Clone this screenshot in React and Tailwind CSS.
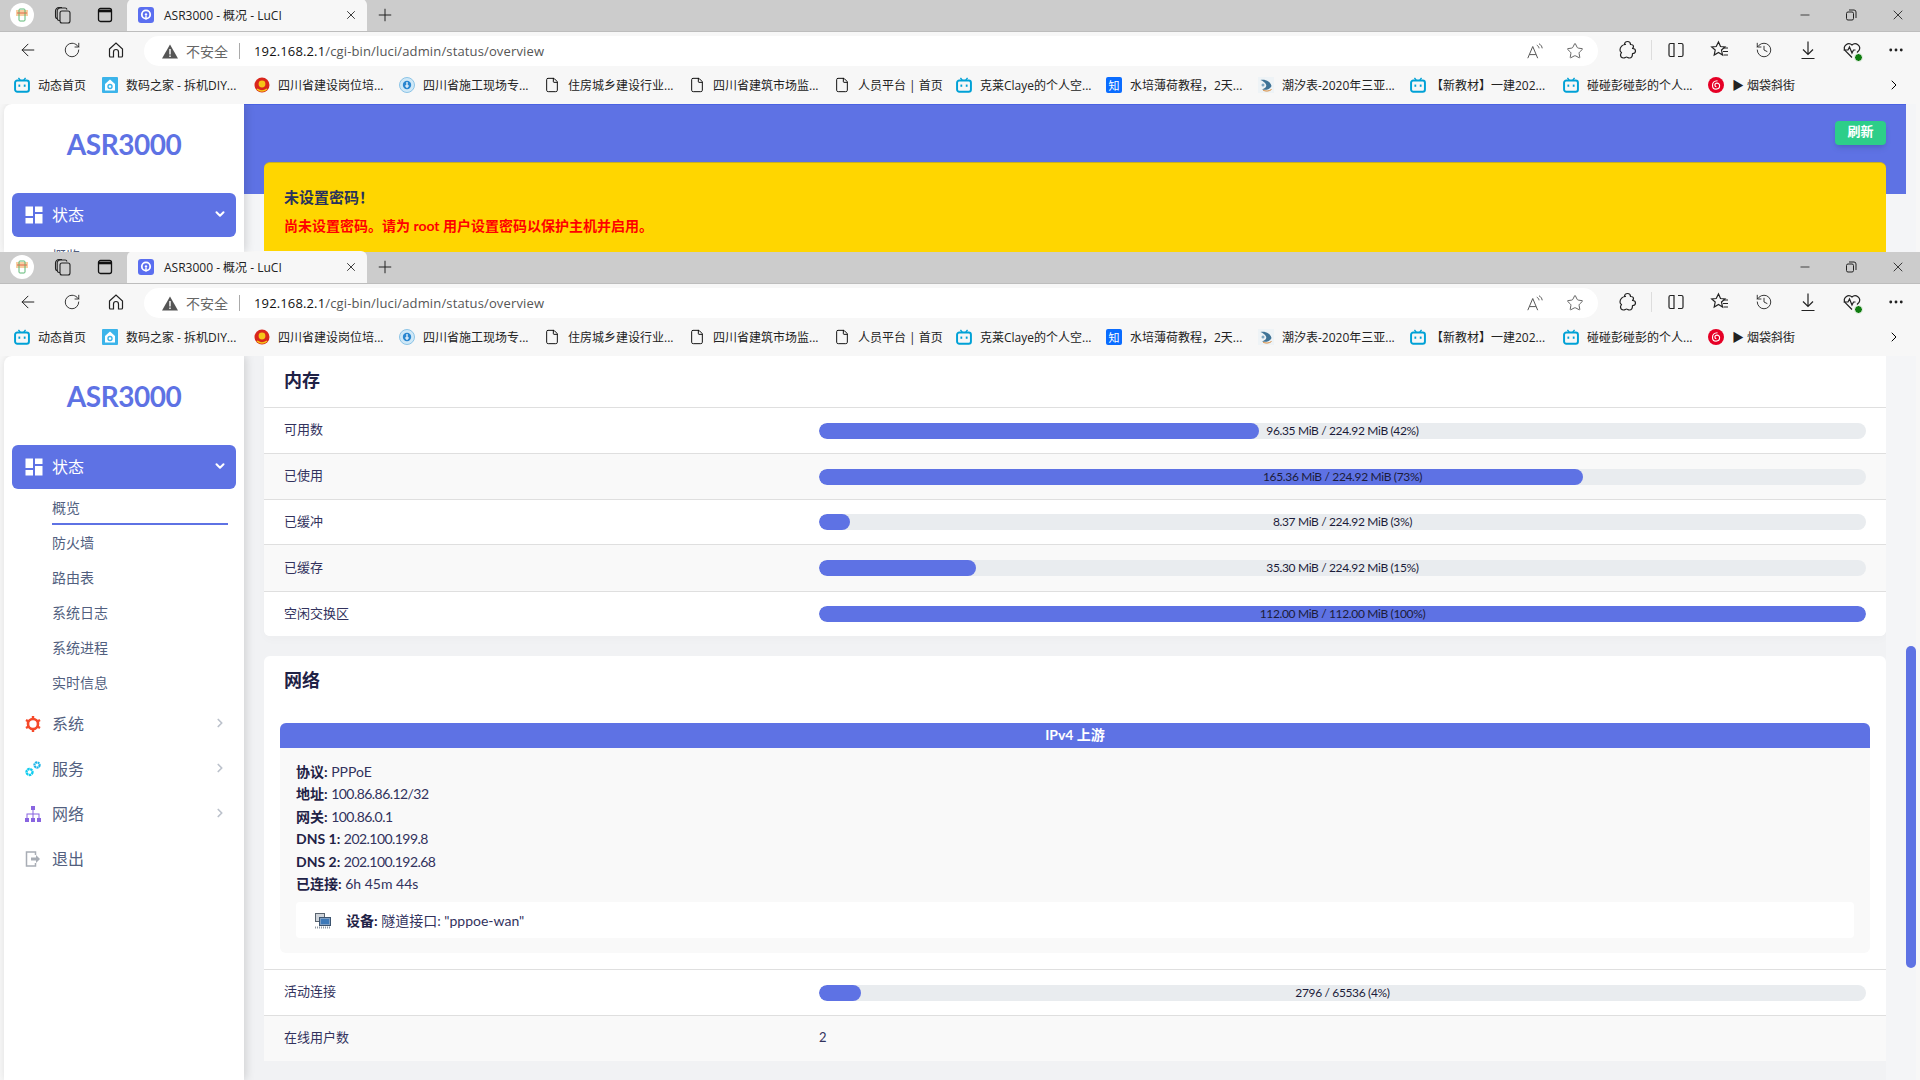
import React from "react";
import { ArrowLeft, RotateCw, Star, History, MoreHorizontal, X, Plus, Minus, File, ChevronRight, ChevronDown } from "lucide-react";

const SANS = "font-['Lato','Noto_Sans_CJK_SC',sans-serif]";

function Bili({ className = "" }) {
  return (
    <svg viewBox="0 0 18 18" className={"w-4 h-4 " + className} fill="none">
      <path d="M5 1l2 2.5M13 1l-2 2.5" stroke="#00a1d6" strokeWidth="1.6" />
      <rect x="1.2" y="4" width="15.6" height="12.6" rx="2.5" stroke="#00a1d6" strokeWidth="2.2" />
      <rect x="5" y="8.5" width="2" height="2.5" fill="#00a1d6" />
      <rect x="11" y="8.5" width="2" height="2.5" fill="#00a1d6" />
    </svg>
  );
}
function Doc() {
  return <File className="w-4 h-4 text-black" strokeWidth={1.4} />;
}
function ItHome() {
  return (
    <svg viewBox="0 0 16 16" className="w-4 h-4">
      <rect width="16" height="16" rx="1" fill="#3cb4ea" />
      <path d="M8 2.5L13 7v6.5H3V7z" fill="#fff" />
      <circle cx="8" cy="9.5" r="2" fill="none" stroke="#3cb4ea" strokeWidth="1.4" />
    </svg>
  );
}
function Emblem() {
  return (
    <svg viewBox="0 0 16 16" className="w-4 h-4">
      <circle cx="8" cy="8" r="7.5" fill="#d9261c" />
      <circle cx="8" cy="7" r="3.4" fill="#f5c518" />
      <path d="M3 12c3 2.4 7 2.4 10 0" stroke="#f5c518" strokeWidth="1.6" fill="none" />
    </svg>
  );
}
function Gov() {
  return (
    <svg viewBox="0 0 16 16" className="w-4 h-4">
      <circle cx="8" cy="8" r="7.5" fill="#cfe8f7" stroke="#8cc4e6" />
      <circle cx="8" cy="8" r="4.2" fill="#2a86cf" />
      <path d="M8 5v6M6 9h4" stroke="#fff" strokeWidth="1.2" />
    </svg>
  );
}
function Zhihu() {
  return (
    <div className="w-4 h-4 rounded-[2px] bg-[#0a6cff] text-white text-[11px] leading-4 text-center font-['Noto_Sans_CJK_SC',sans-serif]">知</div>
  );
}
function Tide() {
  return (
    <svg viewBox="0 0 16 16" className="w-4 h-4">
      <rect width="16" height="16" fill="#eef3f6" />
      <path d="M2.500 3c5-1 10 1.500 11 6-1.500 3.500-6 4.500-9.500 3.500 3-1 5-3 4-5-1-2-3-3.500-5.500-4.500z" fill="#3f7396" />
      <circle cx="5" cy="8" r="1.500" fill="#7fa6c0" />
      <path d="M5 13c2 1.500 6 1.500 8.500-.5" stroke="#d8893a" strokeWidth="1" fill="none" />
    </svg>
  );
}
function Netease() {
  return (
    <svg viewBox="0 0 16 16" className="w-4 h-4">
      <circle cx="8" cy="8" r="8" fill="#e60026" />
      <path d="M9.5 3.8C6.5 3.9 4.5 5.8 4.5 8.4c0 2.2 1.6 3.7 3.6 3.7s3.5-1.5 3.5-3.3c0-1.6-1.1-2.7-2.5-2.7-1.3 0-2.2.9-2.2 2 0 1 .7 1.7 1.5 1.7" stroke="#fff" strokeWidth="1.1" fill="none" />
    </svg>
  );
}

const BOOKMARKS = [
  { w: "w-[88px]", icon: <Bili />, label: "动态首页" },
  { w: "w-[152px]", icon: <ItHome />, label: "数码之家 - 拆机DIY..." },
  { w: "w-[145px]", icon: <Emblem />, label: "四川省建设岗位培..." },
  { w: "w-[145px]", icon: <Gov />, label: "四川省施工现场专..." },
  { w: "w-[145px]", icon: <Doc />, label: "住房城乡建设行业..." },
  { w: "w-[145px]", icon: <Doc />, label: "四川省建筑市场监..." },
  { w: "w-[122px]", icon: <Doc />, label: "人员平台 | 首页" },
  { w: "w-[150px]", icon: <Bili />, label: "克莱Claye的个人空..." },
  { w: "w-[152px]", icon: <Zhihu />, label: "水培薄荷教程，2天..." },
  { w: "w-[152px]", icon: <Tide />, label: "潮汐表-2020年三亚..." },
  { w: "w-[153px]", icon: <Bili />, label: "【新教材】一建202...", gap: "ml-[-3px]" },
  { w: "w-[145px]", icon: <Bili />, label: "碰碰彭碰彭的个人..." },
  { w: "w-[120px]", icon: <Netease />, label: "▶ 烟袋斜街" },
];

function Collections() {
  return (
    <svg viewBox="0 0 18 18" className="w-[18px] h-[18px]" fill="none" stroke="#222" strokeWidth="1.1">
      <rect x="6" y="5" width="10" height="12" rx="2" />
      <path d="M6 14.5H5a2 2 0 0 1-1.800-2V5a3 3 0 0 1 3-3h5a2 2 0 0 1 1.800 1.500" />
      <path d="M3.500 12.500A2 2 0 0 1 1.500 10.500V5A3.500 3.500 0 0 1 5 1.500h3" />
    </svg>
  );
}
function VerticalTabs() {
  return (
    <svg viewBox="0 0 16 16" className="w-4 h-4" fill="none" stroke="#111" strokeWidth="1.3">
      <rect x="1.500" y="1.500" width="13" height="13" rx="2" />
      <path d="M1.500 4h13" strokeWidth="2.600" />
    </svg>
  );
}
function Profile() {
  return (
    <div className="w-6 h-6 rounded-full bg-white flex items-center justify-center">
      <svg viewBox="0 0 16 16" className="w-4 h-4" fill="none">
        <rect x="2" y="3" width="12" height="6" fill="#f6c28a" opacity=".8" />
        <rect x="5" y="2" width="6" height="12" rx="1" stroke="#5cb874" strokeWidth="1" />
        <path d="M3 6h10" stroke="#e06a4a" strokeWidth="1" />
      </svg>
    </div>
  );
}
function Favicon() {
  return (
    <svg viewBox="0 0 16 16" className="w-4 h-4">
      <rect width="16" height="16" rx="3" fill="#5b6ff0" />
      <circle cx="8" cy="7.500" r="4.200" fill="none" stroke="#fff" strokeWidth="1.800" />
      <circle cx="8" cy="7.500" r="1.200" fill="#fff" />
      <path d="M8 9v3.500" stroke="#fff" strokeWidth="1.400" />
    </svg>
  );
}
function HomeIcon() {
  return (
    <svg viewBox="0 0 18 18" className="w-[18px] h-[18px]" fill="none" stroke="#222" strokeWidth="1.200">
      <path d="M2.500 8L9 2l6.500 6v7a1 1 0 0 1-1 1h-3v-5a2.500 2.500 0 0 0-5 0v5h-3a1 1 0 0 1-1-1z" />
    </svg>
  );
}
function ReadAloud() {
  return (
    <svg viewBox="0 0 20 20" className="w-[18px] h-[18px]" fill="none" stroke="#555" strokeWidth="1.100">
      <path d="M2 18L7.500 5 13 18M4 14h7" />
      <path d="M12 3.500c1.500.8 2.300 2 2.500 3.500M14.500 2c2 1 3.200 2.800 3.500 5" />
    </svg>
  );
}
function PuzzleIcon() {
  return (
    <svg viewBox="0 0 20 20" className="w-5 h-5" fill="none" stroke="#222" strokeWidth="1.200" strokeLinejoin="round">
      <path d="M7.500 4.500C7.500 2.500 9 1.500 10.500 1.500S13.500 2.500 13.500 4.500c1.500 0 3 .5 3 2 0 1-.5 1.500-1 2 1.500 0 3 1 3 2.500s-1.500 2.500-3 2.500c0 2-.5 4.500-3 4.500-1.500 0-2-1-3-1s-1.500 1-3 1c-2 0-3-1.500-3-3 0-1 .5-1.500 1-2.500-1-.5-1.500-1.500-1.500-2.500 0-3 2.500-5.500 5.500-5.500z" />
    </svg>
  );
}
function SplitIcon() {
  return (
    <svg viewBox="0 0 20 20" className="w-5 h-5" fill="none" stroke="#222" strokeWidth="1.200">
      <path d="M8 3.500H4.500A1.500 1.500 0 0 0 3 5v10a1.500 1.500 0 0 0 1.500 1.500H8z" />
      <path d="M12 3.500h3.500A1.500 1.500 0 0 1 17 5v10a1.500 1.500 0 0 1-1.500 1.500H12" />
      <path d="M10 1.500v17" strokeOpacity="0" />
    </svg>
  );
}
function FavList() {
  return (
    <svg viewBox="0 0 20 20" className="w-5 h-5" fill="none" stroke="#222" strokeWidth="1.200">
      <path d="M8.500 2l2 4.500 4.500.5-3.500 3 1 5L8.500 12.500 4.200 15l1-5-3.500-3 4.500-.5z" />
      <path d="M13.500 8H18M13 11.500h5M13.500 15H18" />
    </svg>
  );
}
function DownloadIcon() {
  return (
    <svg viewBox="0 0 20 20" className="w-5 h-5" fill="none" stroke="#222" strokeWidth="1.200">
      <path d="M10 1.500v13M5 9.500l5 5 5-5M3.500 18.500h13" />
    </svg>
  );
}
function HealthHeart() {
  return (
    <div className="relative w-5 h-5">
      <svg viewBox="0 0 20 20" className="w-5 h-5" fill="none" stroke="#222" strokeWidth="1.200">
        <path d="M10 17.500L3 10.500a4.500 4.500 0 0 1 7-5.500 4.500 4.500 0 0 1 7 5.500l-2 2" />
        <path d="M1.500 10H6l1.500-3 2.500 6 1.500-3h2" />
      </svg>
      <div className="absolute right-[-1px] bottom-[-2px] w-[9px] h-[9px] rounded-full bg-[#107c10] border border-white" />
    </div>
  );
}
function ToolBtn({ children }) {
  return <div className="w-[44px] h-5 flex items-center justify-center shrink-0">{children}</div>;
}

function Chrome() {
  return (
    <div className="shrink-0 h-[104px] bg-[#f7f7f7] font-['Open_Sans','Noto_Sans_CJK_SC',sans-serif]">
      <div className="h-8 bg-[#cccccc] flex items-end border-b border-[#bdbdbd] relative">
        <div className="h-8 w-[127px] flex items-center pl-[10px] shrink-0">
          <Profile />
          <div className="ml-[20px]"><Collections /></div>
          <div className="ml-[25px]"><VerticalTabs /></div>
        </div>
        <div className="h-8 w-[240px] bg-[#f7f7f7] rounded-t-md flex items-center pl-[11px] pr-[9px] shrink-0">
          <Favicon />
          <span className="ml-[10px] pt-[2px] text-[12px] text-[#222] flex-1 whitespace-nowrap">ASR3000 - 概况 - LuCI</span>
          <X className="w-[14px] h-[14px] text-[#222]" strokeWidth={1.500} />
        </div>
        <div className="h-8 flex items-center ml-2">
          <Plus className="w-5 h-5 text-[#222]" strokeWidth={1.200} />
        </div>
        <div className="ml-auto h-8 flex items-center gap-[32px] pr-[14px]">
          <Minus className="w-[14px] h-[14px] text-[#222]" strokeWidth={1.400} />
          <svg viewBox="0 0 14 14" className="w-[14px] h-[14px]" fill="none" stroke="#222" strokeWidth="1">
            <rect x="2.500" y="4" width="7" height="8" rx="1.500" />
            <path d="M5 2h5a2 2 0 0 1 2 2v6" />
          </svg>
          <X className="w-4 h-4 text-[#222]" strokeWidth={1.300} />
        </div>
      </div>
      <div className="h-[34px] flex items-center text-[#222]">
        <div className="w-[144px] flex items-center shrink-0 pl-[18px] gap-[25px] pt-[2px]">
          <ArrowLeft className="w-5 h-5" strokeWidth={1.200} />
          <RotateCw className="w-[18px] h-[18px]" strokeWidth={1.200} />
          <div className="ml-px"><HomeIcon /></div>
        </div>
        <div className="w-[1454px] h-[30px] mt-[4px] bg-white rounded-full flex items-center pl-[18px] pr-[14px] shrink-0">
          <svg viewBox="0 0 16 15" className="w-4 h-[15px]"><path d="M8 0.500L16 14.500H0z" fill="#555" /><rect x="7.300" y="5" width="1.400" height="5.500" fill="#fff" /><rect x="7.300" y="11.500" width="1.400" height="1.500" fill="#fff" /></svg>
          <span className="ml-[8px] text-[14px] text-[#666]">不安全</span>
          <div className="ml-[11px] w-px h-4 bg-[#aaa]" />
          <span className="ml-[14px] pt-[1px] text-[13px] text-[#555] tracking-[0.14px]"><span className="text-[#111]">192.168.2.1</span>/cgi-bin/luci/admin/status/overview</span>
          <div className="ml-auto flex items-center gap-[22px]">
            <ReadAloud />
            <Star className="w-[18px] h-[18px] text-[#555]" strokeWidth={1.200} />
          </div>
        </div>
        <div className="flex-1 flex items-center pl-[7px] pt-[2px]">
          <ToolBtn><PuzzleIcon /></ToolBtn>
          <div className="mx-[2px] w-px h-5 bg-[#ddd] shrink-0" />
          <ToolBtn><SplitIcon /></ToolBtn>
          <ToolBtn><FavList /></ToolBtn>
          <ToolBtn><History className="w-[18px] h-[18px]" strokeWidth={1.200} /></ToolBtn>
          <ToolBtn><DownloadIcon /></ToolBtn>
          <ToolBtn><HealthHeart /></ToolBtn>
          <ToolBtn><MoreHorizontal className="w-[18px] h-[18px]" strokeWidth={1.800} /></ToolBtn>
        </div>
      </div>
      <div className="h-[38px] flex items-center pl-[14px] text-[12px] text-[#222] whitespace-nowrap relative">
        {BOOKMARKS.map((b) => (
          <div key={b.label} className={"flex items-center gap-[8px] shrink-0 overflow-hidden " + b.w}>
            {b.icon}
            <span className={"pt-[2px] " + (b.gap || "")}>{b.label}</span>
          </div>
        ))}
        <ChevronRight className="absolute right-[18px] top-[11px] w-4 h-4 text-black" strokeWidth={1.500} />
      </div>
    </div>
  );
}

function Gear() {
  return (
    <svg viewBox="0 0 16 16" className="w-4 h-4" fill="none">
      <circle cx="8" cy="8" r="5" stroke="#f5492a" strokeWidth="2.600" />
      <path d="M8 0v3M8 13v3M1 4l2.500 1.500M12.500 10.500L15 12M1 12l2.500-1.500M12.500 5.500L15 4" stroke="#f5492a" strokeWidth="2.400" />
    </svg>
  );
}
function Gears() {
  return (
    <svg viewBox="0 0 16 16" className="w-4 h-4" fill="none">
      <circle cx="4.500" cy="11" r="3" stroke="#11cdef" strokeWidth="2.400" strokeDasharray="2.400 .5" />
      <circle cx="12" cy="4" r="2.600" stroke="#1fb5e8" strokeWidth="2.200" strokeDasharray="2 .5" />
    </svg>
  );
}
function Tree() {
  return (
    <svg viewBox="0 0 16 16" className="w-4 h-4" fill="#8965e0">
      <rect x="6" y="0" width="4" height="4" />
      <rect x="0" y="12" width="4" height="4" />
      <rect x="6" y="12" width="4" height="4" />
      <rect x="12" y="12" width="4" height="4" />
      <path d="M7.500 4h1v3.500H14.500V12h-1V8.500H8.500V12h-1V8.500H2.500V12h-1V7.500h6z" />
    </svg>
  );
}
function Logout() {
  return (
    <svg viewBox="0 0 16 16" className="w-4 h-4" fill="none">
      <path d="M10.500 4V1H1.500v14h9v-3" stroke="#a8adb5" strokeWidth="1.500" />
      <path d="M6 6.500h5V4l4 4-4 4V9.500H6z" fill="#a8adb5" />
    </svg>
  );
}
function Dash() {
  return (
    <svg viewBox="0 0 18 18" className="w-[18px] h-[18px]" fill="#fff">
      <rect x="0.500" y="0.500" width="7.500" height="9.500" />
      <rect x="10" y="0.500" width="7.500" height="5.500" />
      <rect x="0.500" y="12" width="7.500" height="5.500" />
      <rect x="10" y="8" width="7.500" height="9.500" />
    </svg>
  );
}

function Sidebar({ showAll }) {
  const subs = ["防火墙", "路由表", "系统日志", "系统进程", "实时信息"];
  const tops = [
    { label: "系统", icon: <Gear /> },
    { label: "服务", icon: <Gears /> },
    { label: "网络", icon: <Tree /> },
    { label: "退出", icon: <Logout />, noArrow: true },
  ];
  return (
    <aside className="w-[240px] shrink-0 bg-white rounded-tl-lg shadow-[2px_0_10px_rgba(0,0,0,0.14)] relative z-10 flex flex-col">
      <div className="h-[89px] shrink-0 flex items-center justify-center pb-[9px] text-[28px] font-bold text-[#5e72e4] tracking-[-0.5px] font-['Lato',sans-serif]">ASR3000</div>
      <div className="mx-2 h-[44px] shrink-0 rounded-md bg-[#5e72e4] flex items-center pl-[13px] pr-[9px] text-white">
        <Dash />
        <span className="ml-[9px] text-[16px]">状态</span>
        <ChevronDown className="ml-auto mb-[2px] w-[14px] h-[14px]" strokeWidth={3.500} />
      </div>
      <div className="pl-[48px] pr-2 shrink-0 text-[14px] text-[#525f7f]">
        <div className="h-[36px] pt-[9px] w-[176px] border-b-[2px] border-[#5e72e4] leading-[20px]">概览</div>
        {showAll && subs.map((s) => (
          <div key={s} className="h-[35px] flex items-center">{s}</div>
        ))}
      </div>
      {showAll && (
        <div className="pl-[21px] pr-[17px] pt-[1px] text-[16px] text-[#525f7f]">
          {tops.map((t) => (
            <div key={t.label} className="h-[45px] flex items-center">
              {t.icon}
              <span className="ml-[11px]">{t.label}</span>
              {!t.noArrow && <ChevronRight className="ml-auto mb-[2px] w-[14px] h-[14px] text-[#bcc2cc]" strokeWidth={3} />}
            </div>
          ))}
        </div>
      )}
    </aside>
  );
}

function Bar({ pct, text }) {
  return (
    <div className="relative w-[1047px] h-4 rounded-lg bg-[#e9ecef] overflow-hidden">
      <div className={"h-full rounded-lg bg-[#5e72e4] " + pct} />
      <div className="absolute inset-0 flex items-center justify-center text-[12px] tracking-[-0.35px] text-[#1c1c3a] whitespace-nowrap">{text}</div>
    </div>
  );
}

function Row({ label, alt, h, children }) {
  return (
    <div className={"flex items-center pl-5 border-t border-[#dfdfdf] " + h + (alt ? " bg-[#f9f9f9]" : " bg-white")}>
      <div className="w-[535px] shrink-0 pb-[1px] text-[13px] text-[#32325d]">{label}</div>
      {children}
    </div>
  );
}

function InfoLine({ k, v, num }) {
  return (
    <div className="h-[22.400px] leading-[22.400px]">
      <b className="font-bold text-[#1f2246]">{k}:</b> <span className={num ? "tracking-[-0.55px]" : ""}>{v}</span>
    </div>
  );
}

function Thumb({ full }) {
  return (
    <div className={full ? "w-[30px] shrink-0 pl-[20px]" : "w-[30px] shrink-0 bg-[#f4f5f7] pl-[20px] pt-[290px]"}>
      <div className={full ? "w-[10px] h-full rounded-t-lg bg-[#5e72e4]" : "w-[10px] h-[322px] rounded-full bg-[#5e72e4]"} />
    </div>
  );
}

function TopContent() {
  return (
    <div className="h-[148px] flex bg-[#f7f7f7] pl-1 pr-1 overflow-hidden">
      <Sidebar />
      <div className="flex-1 relative bg-[#f4f5f7] flex">
        <div className="absolute left-0 right-[10px] top-0 h-[90px] bg-[#5e72e4] border-t border-[#4a62e2]" />
        <div className="relative w-[1622px] ml-5 shrink-0 flex flex-col">
          <div className="h-[58px] flex justify-end pt-[17px]">
            <button className="w-[51px] h-6 pb-[2px] rounded bg-[#2dce89] text-white text-[13px] font-bold shadow-md">刷新</button>
          </div>
          <div className="flex-1 bg-[#ffd600] rounded-t-md border-t border-[#c9b020] pl-5 pt-[22px]">
            <div className="text-[15px] font-bold text-[#28325d] leading-[24px]">未设置密码！</div>
            <div className="mt-[7px] text-[14px] font-bold text-[#ff0000] leading-[20px]">尚未设置密码。请为 root 用户设置密码以保护主机并启用。</div>
          </div>
        </div>
        <div className="relative ml-auto"><Thumb full /></div>
      </div>
    </div>
  );
}

function BottomContent() {
  return (
    <div className="h-[724px] flex bg-[#f7f7f7] pl-1 pr-1 overflow-hidden">
      <Sidebar showAll />
      <div className="flex-1 bg-[#f1f2f4] flex">
        <div className="w-[1622px] ml-5 shrink-0 text-[#32325d]">
          <div className="bg-white rounded-b-md shadow-[0_4px_10px_rgba(0,0,0,0.02)] overflow-hidden">
            <div className="h-[51px] flex items-center pl-5 pb-[2px] text-[18px] font-bold text-[#1f2246]">内存</div>
            <Row label="可用数" h="h-[46px]"><Bar pct="w-[42%]" text="96.35 MiB / 224.92 MiB (42%)" /></Row>
            <Row label="已使用" alt h="h-[46px]"><Bar pct="w-[73%]" text="165.36 MiB / 224.92 MiB (73%)" /></Row>
            <Row label="已缓冲" h="h-[45px]"><Bar pct="w-[3%]" text="8.37 MiB / 224.92 MiB (3%)" /></Row>
            <Row label="已缓存" alt h="h-[47px]"><Bar pct="w-[15%]" text="35.30 MiB / 224.92 MiB (15%)" /></Row>
            <Row label="空闲交换区" h="h-[45px]"><Bar pct="w-full" text="112.00 MiB / 112.00 MiB (100%)" /></Row>
          </div>
          <div className="mt-5 bg-white rounded-t-md overflow-hidden">
            <div className="h-[67px] pl-5 flex items-start pt-[11px] text-[18px] font-bold text-[#1f2246]">网络</div>
            <div className="mx-4 rounded-md bg-[#f9f9f9] h-[230px]">
              <div className="h-[25px] pb-[2px] rounded-t-md bg-[#5e72e4] text-white text-[14px] font-bold flex items-center justify-center">IPv4 上游</div>
              <div className="px-4 pt-[13px] text-[14px]">
                <InfoLine k="协议" v="PPPoE" />
                <InfoLine k="地址" v="100.86.86.12/32" num />
                <InfoLine k="网关" v="100.86.0.1" num />
                <InfoLine k="DNS 1" v="202.100.199.8" num />
                <InfoLine k="DNS 2" v="202.100.192.68" num />
                <InfoLine k="已连接" v="6h 45m 44s" />
                <div className="mt-[7px] h-9 bg-white rounded flex items-center pl-[19px]">
                  <svg viewBox="0 0 16 16" className="w-4 h-4 mt-[2px]">
                    <rect x="0.500" y="0.500" width="9" height="8" fill="#cfd4da" stroke="#59636e" />
                    <rect x="4.500" y="4.500" width="11" height="8" fill="#7f9fc4" stroke="#3d5570" />
                    <rect x="6" y="6" width="8" height="5" fill="#3d79b8" />
                    <path d="M0 14.500h16" stroke="#8d97a1" strokeWidth="2" strokeDasharray="1 1" />
                  </svg>
                  <span className="ml-[15px]"><b className="font-bold text-[#1f2246]">设备:</b> 隧道接口: "pppoe-wan"</span>
                </div>
              </div>
            </div>
            <div className="h-4" />
            <Row label="活动连接" h="h-[46px]"><Bar pct="w-[4%]" text="2796 / 65536 (4%)" /></Row>
            <Row label="在线用户数" alt h="h-[46px]"><span className="text-[13px] pb-[1px]">2</span></Row>
          </div>
        </div>
        <Thumb />
      </div>
    </div>
  );
}

export default function App() {
  return (
    <div className={"w-[1920px] h-[1080px] overflow-hidden bg-[#f7f7f7] " + SANS}>
      <Chrome />
      <TopContent />
      <Chrome />
      <BottomContent />
    </div>
  );
}
